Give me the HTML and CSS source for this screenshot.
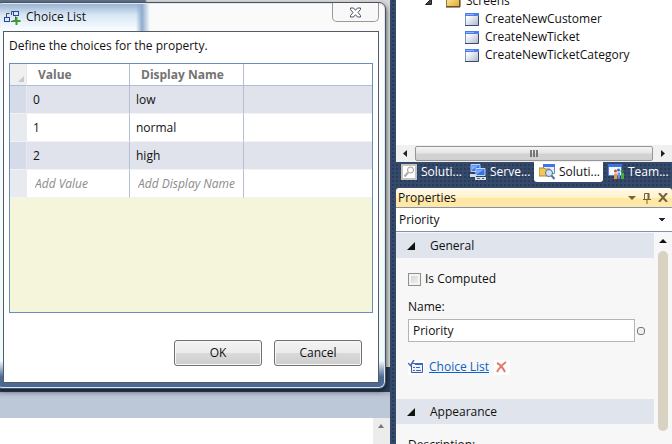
FILE: index.html
```html
<!DOCTYPE html>
<html lang="en">
<head>
<meta charset="utf-8">
<title>Choice List</title>
<link rel="stylesheet" href="styles.css">
</head>
<body>
<div class="ide">
  <main class="editor">
    <div class="surface"></div>
    <div class="frame-edge"></div>
    <div class="output-title"></div>
    <div class="output"><div class="output-scroll"><svg width="6" height="4" viewBox="0 0 6 4"><path d="M3 0 6 4H0z" fill="#777"/></svg></div></div>

    <section class="dialog" role="dialog" aria-labelledby="dialog-title">
      <header class="dialog-bar">
        <svg class="dialog-icon" width="17" height="16" viewBox="0 0 17 16">
          <path d="M2.500 8V4.500h3M7.500 6V2.500h2M7 12.500h4.500v-5" fill="none" stroke="#434a59"/>
          <rect x="9.500" y="2.500" width="5" height="4" fill="#dce8ff" stroke="#24479b"/>
          <rect x=".5" y="8.500" width="5" height="4" fill="#dce8ff" stroke="#24479b"/>
          <path d="M12.500 8v8M8.500 12h8" stroke="#3f9a35" stroke-width="2"/>
        </svg>
        <h1 id="dialog-title">Choice List</h1>
        <button class="close" aria-label="Close"><svg width="13" height="11" viewBox="0 0 13 11"><path d="M1.500 1h3l2 2.300L8.500 1h3v1.500L9 5.500l2.500 3V10h-3l-2-2.300L4.500 10h-3V8.500L4 5.500 1.500 2.500z" fill="#fff" stroke="#4b4f61"/></svg></button>
      </header>
      <div class="dialog-body">
        <p>Define the choices for the property.</p>
        <div class="grid">
          <table>
            <colgroup><col class="c-mark"><col class="c-value"><col class="c-name"><col></colgroup>
            <thead><tr><td class="corner"><svg width="6" height="6" viewBox="0 0 6 6"><path d="M6 0v6H0z" fill="#c8c8c8"/></svg></td><th>Value</th><th>Display Name</th><td></td></tr></thead>
            <tbody>
              <tr><td></td><td>0</td><td>low</td><td></td></tr>
              <tr><td></td><td>1</td><td>normal</td><td></td></tr>
              <tr><td></td><td>2</td><td>high</td><td></td></tr>
              <tr><td></td><td><input aria-label="Add Value" placeholder="Add Value"></td><td><input aria-label="Add Display Name" placeholder="Add Display Name"></td><td></td></tr>
            </tbody>
          </table>
        </div>
        <div class="actions"><button>OK</button><button>Cancel</button></div>
      </div>
    </section>
  </main>

  <aside class="side">
    <section class="explorer">
      <ul class="tree">
        <li class="folder">
          <svg width="7" height="7" viewBox="0 0 7 7"><path d="M6.500.5v6h-6z" fill="#444" stroke="#222"/></svg>
          <svg width="16" height="14" viewBox="0 0 16 14"><defs><linearGradient id="fold" x2="1" y2="1"><stop stop-color="#fff3b5"/><stop offset="1" stop-color="#e3a824"/></linearGradient></defs><path d="M1.500 1.500h5l1 2h7v9h-13z" fill="url(#fold)" stroke="#9a742c"/><path d="M1 13h14V4" fill="none" stroke="#3c3425"/></svg>
          <span>Screens</span>
        </li>
        <li><svg width="14" height="13" viewBox="0 0 14 13"><defs><linearGradient id="win" x2="1" y2="1"><stop offset=".2" stop-color="#fff"/><stop offset="1" stop-color="#a9b6d0"/></linearGradient></defs><path d="M.5.5h13v12H.5z" fill="url(#win)" stroke="#8093b9"/><path d="M0 0h14v3H0z" fill="#4a7df0"/><path d="M1 1h8v1H1z" fill="#8fb0fa"/><path d="M0 12.500h13.500V3" fill="none" stroke="#3b4968"/></svg><span>CreateNewCustomer</span></li>
        <li><svg width="14" height="13" viewBox="0 0 14 13"><path d="M.5.5h13v12H.5z" fill="url(#win)" stroke="#8093b9"/><path d="M0 0h14v3H0z" fill="#4a7df0"/><path d="M1 1h8v1H1z" fill="#8fb0fa"/><path d="M0 12.500h13.500V3" fill="none" stroke="#3b4968"/></svg><span>CreateNewTicket</span></li>
        <li><svg width="14" height="13" viewBox="0 0 14 13"><path d="M.5.5h13v12H.5z" fill="url(#win)" stroke="#8093b9"/><path d="M0 0h14v3H0z" fill="#4a7df0"/><path d="M1 1h8v1H1z" fill="#8fb0fa"/><path d="M0 12.500h13.500V3" fill="none" stroke="#3b4968"/></svg><span>CreateNewTicketCategory</span></li>
      </ul>
      <div class="hscroll">
        <svg width="4" height="7" viewBox="0 0 4 7"><path d="M4 0v7L0 3.500z" fill="#222"/></svg>
        <div class="thumb"><svg width="9" height="7" viewBox="0 0 9 7"><path d="M1 0v7M4 0v7M7 0v7" stroke="#555" stroke-width="1.500"/></svg></div>
        <svg width="4" height="7" viewBox="0 0 4 7"><path d="M0 0v7l4-3.500z" fill="#222"/></svg>
      </div>
    </section>

    <nav class="tabs">
      <button><svg width="16" height="16" viewBox="0 0 16 16"><path d="M1 1h14v14H1z" fill="#fff" stroke="#c4c4c4" stroke-width="2"/><circle cx="9.500" cy="6" r="3" fill="none" stroke="#999"/><path d="m7 8.500-3.500 4" stroke="#aaa" stroke-width="2"/></svg>Soluti...</button>
      <button><svg width="16" height="16" viewBox="0 0 16 16"><path d="M1 .5h9v7H1z" fill="#3878e8" stroke="#b9d2ff"/><path d="M2 1.500h7L2 6z" fill="#7caeff"/><path d="M0 10h6v3H0z" fill="#d5dbe7"/><path d="M6 4.500h9v7H6z" fill="#3472e4" stroke="#c4d9ff"/><path d="M7 5.500h7L7 10z" fill="#79aaff"/><path d="M5 13h11v3H5z" fill="#d8dde6"/><path d="M7 14.500h3M12 14.500h2" stroke="#55647c"/></svg>Serve...</button>
      <button class="active"><svg width="16" height="16" viewBox="0 0 16 16"><path d="M4.500.5h11v9h-11z" fill="#e7efff" stroke="#628ae0"/><path d="M4 0h12v3H4z" fill="#3e77e5"/><path d="M0 4h5l1 1h5v7H0z" fill="#f3c65a" stroke="#b88324"/><circle cx="10" cy="9" r="3.500" fill="#cfe4ff" stroke="#58708e"/><path d="m12.500 11.500 3 3.500" stroke="#4d74a5" stroke-width="2"/></svg>Soluti...</button>
      <button><svg width="16" height="16" viewBox="0 0 16 16"><path d="M.5.5h13v11H.5z" fill="#f4f7ff" stroke="#4e80e6"/><path d="M0 0h14v3H0z" fill="#3c73e1"/><circle cx="7.500" cy="7" r="1.500" fill="#d94832"/><circle cx="10.500" cy="6" r="1.500" fill="#3968c8"/><circle cx="14" cy="7" r="1.500" fill="#36913b"/><path d="M6 15V9.500h3V15" fill="#ed9a37"/><path d="M9.500 14.500V8.500h2.500v6" fill="#6b91e8"/><path d="M13 15V9h3v6" fill="#4bad4a"/></svg>Team...</button>
    </nav>

    <section class="props">
      <header class="props-bar">
        <h2>Properties</h2>
        <svg width="8" height="4" viewBox="0 0 8 4"><path d="M0 0h8L4 4z" fill="#75633d"/></svg>
        <svg width="8" height="12" viewBox="0 0 8 12"><path d="M1.500 7V1.500h4V7M0 7.500h8M4 8v4" fill="none" stroke="#75633d"/><path d="M5.500 1v6" stroke="#75633d" stroke-width="2"/></svg>
        <svg width="10" height="9" viewBox="0 0 10 9"><path d="m1 0 8 9M9 0 1 9" stroke="#75633d" stroke-width="2"/></svg>
      </header>
      <select class="target" aria-label="Selected object"><option>Priority</option></select>
      <div class="props-view">
        <div class="props-list">
          <h3><svg width="8" height="8" viewBox="0 0 8 8"><path d="M8 0v8H0z" fill="#111"/></svg>General</h3>
          <div class="fields">
            <label class="check"><input type="checkbox">Is Computed</label>
            <label class="name-label" for="name">Name:</label>
            <div class="name-row"><input id="name" value="Priority"><svg width="8" height="8" viewBox="0 0 8 8"><rect x=".5" y=".5" width="7" height="7" rx="2.500" fill="#eee" stroke="#777"/></svg></div>
            <div class="choice">
              <svg width="16" height="15" viewBox="0 0 16 15"><path d="M0 0h16v15H0z" fill="#fff"/><path d="M3.500 3.500h11v9h-11z" fill="#edf3ff" stroke="#3d5da6"/><path d="M7 3h8v2H7z" fill="#3b65c8"/><path d="M5 7.500h2M8 7.500h4M5 10.500h2M8 10.500h5" stroke="#4267ba"/><path d="m0 3 2.500 2.500L6 0" fill="none" stroke="#506baf" stroke-width="1.500"/></svg>
              <a href="#choices">Choice List</a>
              <svg width="16" height="15" viewBox="0 0 16 15"><path d="M0 0h16v15H0z" fill="#fff"/><path d="M3 3c4 2 6 5 8 9M12 2C8 5 5 8 3 12" fill="none" stroke="#df7c6d" stroke-width="2"/></svg>
            </div>
          </div>
          <h3><svg width="8" height="8" viewBox="0 0 8 8"><path d="M8 0v8H0z" fill="#111"/></svg>Appearance</h3>
          <div class="fields"><span>Description:</span></div>
        </div>
        <div class="vscroll"><svg width="8" height="4" viewBox="0 0 8 4"><path d="M4 0 8 4H0z" fill="#111"/></svg><div class="vthumb"></div></div>
      </div>
    </section>
  </aside>
</div>
</body>
</html>
```
FILE: styles.css
```css
* { box-sizing: border-box; }
body, h1, h2, h3, p, ul { margin: 0; padding: 0; }
body {
  height: 100vh;
  overflow: hidden;
  font: 12px/18px "Open Sans", "Noto Sans", sans-serif;
  color: #111;
}
h1, h2, h3 { font-size: 12px; font-weight: 400; }
button, input, select { font: inherit; color: inherit; border-radius: 0; }
svg { display: block; flex: none; }
.ide {
  display: grid;
  grid-template-columns: minmax(0, 1fr) 276px;
  gap: 6px;
  height: 100%;
  background: radial-gradient(circle at 1px 1px, #293b59 1px, transparent 1px) 0 0 / 4px 4px, #35496a;
}

/* Editor behind the dialog */
.editor { position: relative; display: flex; flex-direction: column; min-width: 0; }
.surface { flex: 1; background: linear-gradient(90deg, #5d7188 145px, #d8d8d8 147px); }
.frame-edge { height: 25px; background: #293d5c; }
.output-title { height: 26px; background: linear-gradient(#a5b0c2, #bcc7d8 6px); }
.output { display: flex; justify-content: flex-end; height: 26px; background: #fff; }
.output-scroll { width: 17px; padding: 6px 0 0 5px; background: #ececec; }

/* Dialog */
.dialog {
  position: absolute;
  top: 2px;
  left: -5px;
  right: 4px;
  padding: 0 6px 5px 7px;
  border: 1px solid #4b545e;
  border-radius: 7px;
  background:
    linear-gradient(180deg, transparent 358px, #4a6994 374px),
    linear-gradient(90deg, transparent 140px, #8eaccf 146px, #fafafa 154px) 0 0 / 100% 28px no-repeat,
    linear-gradient(180deg, #94afce, #d8e7f5 12px, #fafdff 28px, #eefafa);
  box-shadow: inset 0 0 0 1px #dce8f2, 1px 2px 4px #0008;
}
.dialog-bar { display: flex; align-items: flex-start; height: 28px; }
.dialog-icon { margin: 6px 5px 0 1px; }
.dialog-bar h1 { flex: 1; padding-top: 5px; }
.close {
  display: grid;
  place-items: center;
  width: 47px;
  height: 19px;
  padding: 0;
  border: 1px solid #999;
  border-top: 0;
  border-radius: 0 0 5px 5px;
  background: #f8f8f8;
}
.dialog-body { padding: 5px 5px 16px; border: 1px solid #555b64; background: #fff; }
.grid { height: 250px; margin-top: 8px; border: 1px solid #6b8eb9; background: #f5f5dc; }
table { width: 100%; border-collapse: separate; border-spacing: 0; table-layout: fixed; background: #fff; }
.c-mark { width: 17px; }
.c-value { width: 103px; }
.c-name { width: 114px; }
td, th { height: 28px; padding: 0 0 0 6px; border-right: 1px solid #b4bfd1; border-bottom: 1px solid #f1f3f7; text-align: left; }
td:last-child { border-right: 0; }
td:first-child { border-right-color: #e7ebef; background: #e7ebef; }
thead td, thead th { height: 22px; border-bottom-color: #b0bdd4; }
th { padding-left: 11px; color: #737373; font-size: 12px; font-weight: 700; line-height: 18px; }
thead .corner { padding: 8px 0 0 8px; background: #f0f0f0; }
tbody tr:nth-child(odd) td { background: #e0e3eb; }
tbody tr:nth-child(odd) td:first-child { background: #d5dbe8; }
td input { width: 100%; padding: 0 0 0 2px; border: 0; background: none; }
td input::placeholder { color: #8b8b8b; font-style: italic; opacity: 1; }
.actions { display: flex; justify-content: flex-end; gap: 12px; padding: 27px 11px 0 0; }
.actions button {
  width: 88px;
  height: 26px;
  padding: 0;
  border: 1px solid #707070;
  border-radius: 3px;
  background: linear-gradient(#f3f3f3, #ebebeb 50%, #dadada 50%, #cdcdcd);
  box-shadow: inset 0 0 0 1px #f8f8f8;
}

/* Tool windows */
.side { display: flex; flex-direction: column; min-width: 0; min-height: 0; }
.explorer { display: flex; flex-direction: column; height: 162px; flex: none; background: #fff; overflow: hidden; }
.tree { flex: 1; margin-top: -8px; list-style: none; }
.tree li { display: flex; align-items: center; gap: 6px; height: 18px; padding-left: 69px; }
.tree .folder { padding-left: 29px; gap: 5px; }
.tree .folder svg + svg { margin-left: 8px; }
.hscroll { display: flex; align-items: center; gap: 8px; height: 17px; padding: 0 7px; background: #f0f0f0; }
.thumb {
  flex: 1;
  display: grid;
  place-items: center;
  height: 15px;
  border: 1px solid #969696;
  border-radius: 2px;
  background: linear-gradient(#f4f4f4, #e5e5e5 45%, #d2d2d2 55%, #d0d0d0);
}
.tabs { display: grid; grid-template-columns: repeat(4, 1fr); height: 20px; margin-bottom: 6px; flex: none; }
.tabs button {
  display: flex;
  align-items: center;
  gap: 4px;
  min-width: 0;
  padding: 0 0 0 5px;
  border: 0;
  background: none;
  color: #fff;
  white-space: nowrap;
}
.tabs .active { border-radius: 0 0 3px 3px; background: #fff; color: #111; }
.props { flex: 1; display: flex; flex-direction: column; min-height: 0; }
.props-bar {
  display: flex;
  align-items: center;
  gap: 7px;
  height: 19px;
  flex: none;
  padding: 0 4px 0 2px;
  border-radius: 3px 3px 0 0;
  background: linear-gradient(#fffbef, #fff1c8 50%, #ffe8a6 50%);
}
.props-bar h2 { flex: 1; }
.target {
  appearance: none;
  width: 100%;
  height: 25px;
  flex: none;
  padding: 0 3px;
  border: solid #8591ad;
  border-width: 1px 0;
  background: linear-gradient(135deg, #1b293e 50%, transparent 50%) right 6px center / 4px 4px no-repeat,
    linear-gradient(225deg, #1b293e 50%, transparent 50%) right 10px center / 4px 4px no-repeat, #fff;
}
.props-view { flex: 1; display: flex; min-height: 0; overflow: hidden; background: #f7f7f7; }
.props-list { flex: 1; min-width: 0; padding-top: 1px; }
.props-list h3 { display: flex; align-items: center; gap: 15px; height: 25px; padding-left: 11px; background: #e0e4ed; }
.fields { padding: 12px 7px 0 12px; }
.check { display: flex; align-items: center; gap: 4px; }
.check input {
  appearance: none;
  width: 13px;
  height: 13px;
  margin: 0;
  border: 1px solid #8e8f8f;
  background: linear-gradient(135deg, #cbcfd5, #f6f6f6);
  box-shadow: inset 0 0 0 2px #f4f4f4;
}
.name-label { display: block; margin: 10px 0 3px; }
.name-row { display: flex; align-items: center; gap: 2px; padding-right: 2px; }
.name-row input { flex: 1; min-width: 0; height: 23px; padding: 0 4px; border: 1px solid #b4b4b4; background: #fff; }
.choice { display: flex; align-items: center; gap: 5px; padding: 16px 0 23px; }
a { color: #0c62c6; }
.vscroll { display: flex; flex-direction: column; align-items: center; gap: 8px; width: 18px; padding: 7px 0 13px; }
.vthumb { flex: 1; width: 10px; border-radius: 5px; background: #d8d2c2; }
```
